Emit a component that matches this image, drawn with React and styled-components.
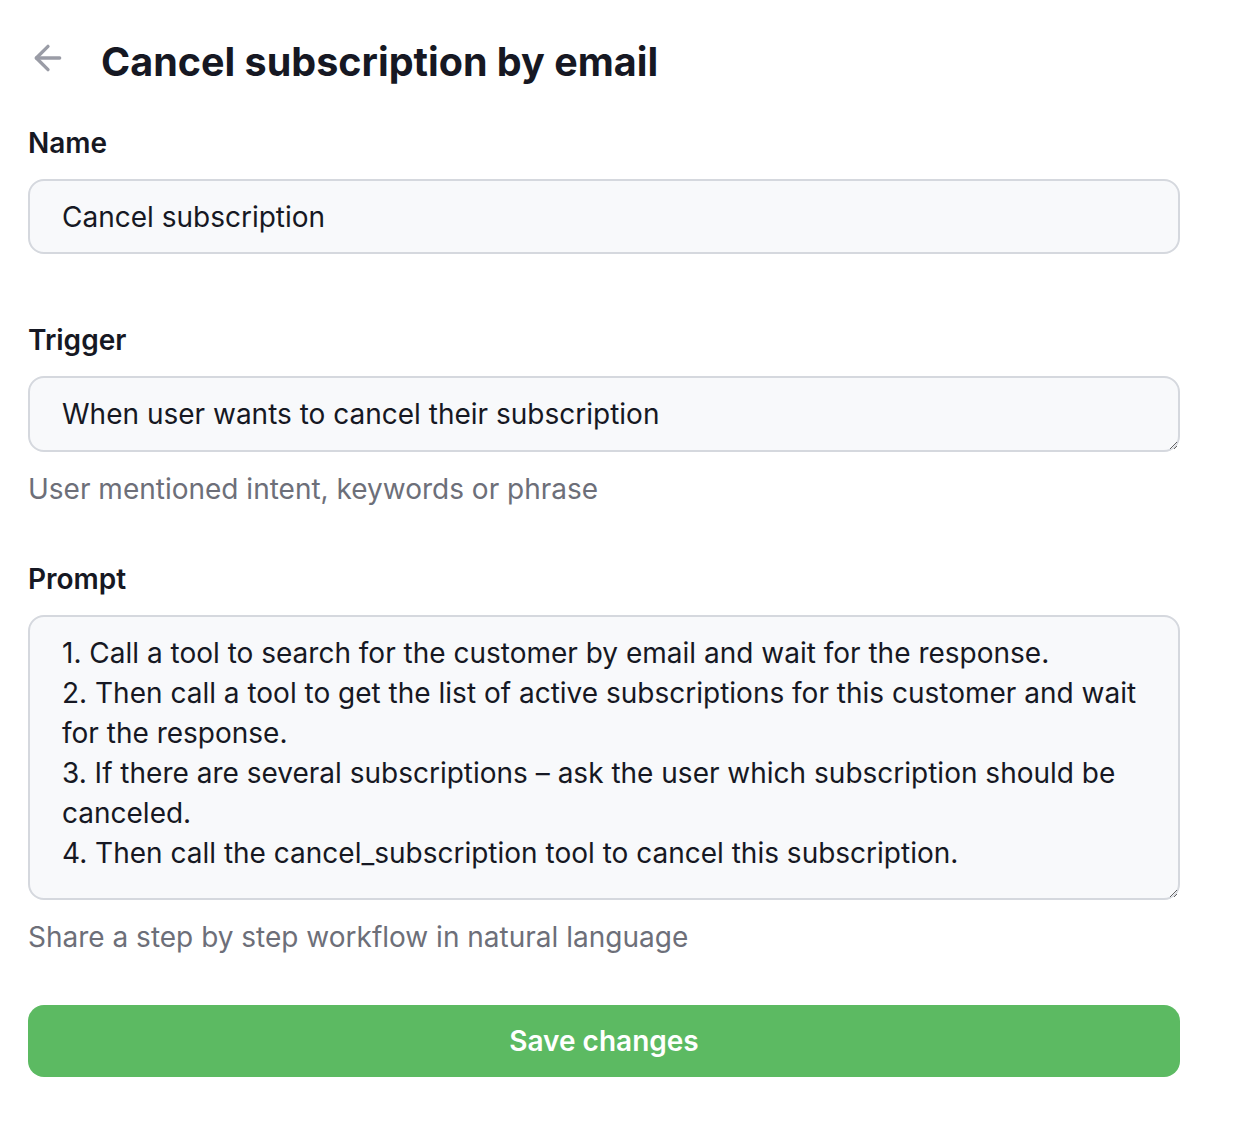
import React from "react";
import styled, { createGlobalStyle } from "styled-components";
import { ArrowLeft } from "lucide-react";

const GlobalStyle = createGlobalStyle`
  body {
    margin: 0;
    background: #ffffff;
    font-family: Inter, "Noto Sans", sans-serif;
    color: #161823;
  }
`;

function Field({ label, hint, children }) {
  return (
    <FieldBlock>
      <Label>{label}</Label>
      {children}
      {hint && <Hint>{hint}</Hint>}
    </FieldBlock>
  );
}

function App() {
  return (
    <Page>
      <GlobalStyle />
      <Header>
        <BackButton aria-label="Back">
          <ArrowLeft size={40} strokeWidth={2} />
        </BackButton>
        <Title>Cancel subscription by email</Title>
      </Header>
      <Form>
        <Field label="Name">
          <TextInput defaultValue="Cancel subscription" />
        </Field>
        <Field label="Trigger" hint="User mentioned intent, keywords or phrase">
          <TextArea
            $height={76}
            defaultValue="When user wants to cancel their subscription"
          />
        </Field>
        <Field label="Prompt" hint="Share a step by step workflow in natural language">
          <TextArea
            $height={285}
            defaultValue={
              "1. Call a tool to search for the customer by email and wait for the response.\n2. Then call a tool to get the list of active subscriptions for this customer and wait for the response.\n3. If there are several subscriptions – ask the user which subscription should be canceled.\n4. Then call the cancel_subscription tool to cancel this subscription."
            }
          />
        </Field>
        <SaveButton>Save changes</SaveButton>
      </Form>
    </Page>
  );
}

const Page = styled.div`
  padding: 38px 0 40px 28px;
  width: 1152px;
`;

const Header = styled.div`
  display: flex;
  align-items: center;
  gap: 33px;
  height: 48px;
`;

const BackButton = styled.button`
  display: flex;
  align-items: center;
  justify-content: center;
  width: 40px;
  height: 40px;
  padding: 0;
  margin-top: -9px;
  border: none;
  background: none;
  color: #9a9ca6;
  cursor: pointer;
`;

const Title = styled.h1`
  margin: 0;
  font-size: 39.5px;
  font-weight: 700;
  line-height: 48px;
  color: #161823;
`;

const Form = styled.div`
  display: flex;
  flex-direction: column;
  margin-top: 37px;
`;

const FieldBlock = styled.div`
  display: flex;
  flex-direction: column;
  margin-bottom: 66px;
`;

const Label = styled.label`
  font-size: 28px;
  font-weight: 600;
  line-height: 40px;
  color: #161823;
  margin-bottom: 16px;
`;

const controlStyles = `
  box-sizing: border-box;
  width: 100%;
  border: 2px solid #d5d8de;
  border-radius: 16px;
  background: #f8f9fb;
  font-family: Inter, "Noto Sans", sans-serif;
  font-size: 28px;
  line-height: 40px;
  color: #161823;
  outline: none;
`;

const TextInput = styled.input`
  ${controlStyles}
  height: 75px;
  padding: 0 32px;
`;

const TextArea = styled.textarea`
  ${controlStyles}
  height: ${(p) => p.$height}px;
  padding: 16px 32px;
  resize: vertical;
  display: block;
`;

const Hint = styled.div`
  margin-top: 17px;
  font-size: 28px;
  line-height: 40px;
  color: #6d6f79;
  margin-bottom: -16px;
`;

const SaveButton = styled.button`
  height: 72px;
  border: none;
  border-radius: 16px;
  background: #5cba62;
  color: #ffffff;
  font-family: Inter, "Noto Sans", sans-serif;
  font-size: 28px;
  font-weight: 600;
  cursor: pointer;
  margin-top: -2px;
`;

export default App;
